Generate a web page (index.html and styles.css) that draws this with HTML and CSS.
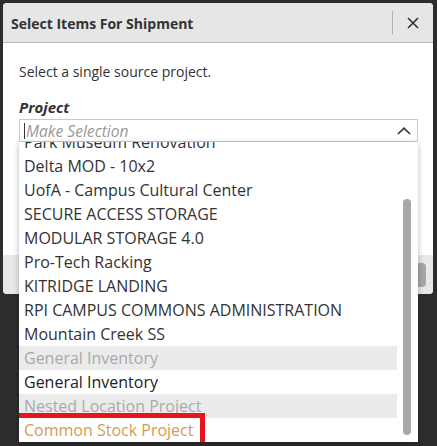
FILE: index.html
```html
<!DOCTYPE html>
<html>
<head>
<meta charset="utf-8">
<link rel="stylesheet" href="styles.css">
</head>
<body>
<div class="page">
  <div class="dialog">
    <div class="header">
      <div class="title">Select Items For Shipment</div>
      <div class="divider"></div>
      <button class="close" aria-label="Close">
        <svg width="12" height="12" viewBox="0 0 12 12"><path d="M1 1L11 11M11 1L1 11" stroke="#333" stroke-width="1.6" fill="none"/></svg>
      </button>
    </div>
    <div class="body">
      <p class="intro">Select a single source project.</p>
      <label class="label">Project</label>
      <div class="field">
        <div class="input">
          <span class="caret"></span>
          <span class="placeholder">Make Selection</span>
          <svg class="chev" width="14" height="8" viewBox="0 0 14 8"><path d="M1 7L7 1.2L13 7" stroke="#333" stroke-width="1.6" fill="none"/></svg>
        </div>
        <div class="menu">
          <ul class="options">
            <li><span>Park Museum Renovation</span></li>
            <li><span>Delta MOD - 10x2</span></li>
            <li><span>UofA - Campus Cultural Center</span></li>
            <li><span>SECURE ACCESS STORAGE</span></li>
            <li><span>MODULAR STORAGE 4.0</span></li>
            <li><span>Pro-Tech Racking</span></li>
            <li><span>KITRIDGE LANDING</span></li>
            <li><span>RPI CAMPUS COMMONS ADMINISTRATION</span></li>
            <li><span>Mountain Creek SS</span></li>
            <li class="disabled"><span>General Inventory</span></li>
            <li class="plain"><span>General Inventory</span></li>
            <li class="disabled"><span>Nested Location Project</span></li>
            <li class="accent"><span class="mark">Common Stock Project</span></li>
          </ul>
          <div class="thumb"></div>
        </div>
      </div>
    </div>
    <div class="footer">
      <button class="btn">Cancel</button>
      <button class="btn primary">Next</button>
    </div>
  </div>
</div>
</body>
</html>
```

FILE: styles.css
```css
html, body {
  margin: 0;
  padding: 0;
  background: #2d2d2d;
  font-family: "Open Sans", "Noto Sans", sans-serif;
  color: #333;
}

.page {
  padding: 3px 4px 0 3px;
  height: 443px;
  overflow: hidden;
}

.dialog {
  width: 430px;
  background: #fff;
  border-radius: 4px;
}

.header {
  display: flex;
  align-items: center;
  height: 39px;
  background: #e6e6e6;
  border-bottom: 1px solid #b9b9b9;
  border-radius: 4px 4px 0 0;
  padding-left: 8px;
}

.title {
  flex: 1;
  font-size: 14px;
  font-weight: 700;
  color: #333;
  padding-top: 1px;
}

.divider {
  width: 1px;
  height: 23px;
  background: #b0b0b0;
}

.close {
  width: 40px;
  height: 39px;
  border: 0;
  background: transparent;
  padding: 0;
  display: flex;
  align-items: center;
  justify-content: center;
}

.body {
  padding: 19px 15px 0 16px;
  height: 193px;
}

.intro {
  margin: 0;
  font-size: 14px;
  line-height: 20px;
  color: #333;
}

.label {
  display: block;
  margin-top: 15px;
  font-size: 15px;
  line-height: 20px;
  font-weight: 700;
  font-style: italic;
  color: #333;
}

.field {
  position: relative;
  margin-top: 2px;
}

.input {
  height: 21px;
  border: 1px solid #c9c9c9;
  display: flex;
  align-items: center;
  padding-left: 4px;
  padding-right: 6px;
}

.caret {
  width: 1px;
  height: 16px;
  background: #333;
  margin-right: 1px;
}

.placeholder {
  flex: 1;
  font-size: 15.6px;
  font-style: italic;
  color: #999;
}

.chev {
  display: block;
}

.menu {
  position: absolute;
  left: 0;
  right: 0;
  top: 23px;
  height: 300px;
  background: #fff;
  box-shadow: 0 2px 6px rgba(0, 0, 0, 0.28);
  z-index: 5;
}

.options {
  list-style: none;
  margin: 0;
  padding: 0;
  width: 378px;
  height: 300px;
  overflow: hidden;
}

.options li {
  height: 24px;
  line-height: 24px;
  font-size: 16px;
  color: #333;
  white-space: nowrap;
}

.options li:first-child {
  margin-top: -12px;
}

.options li span {
  display: inline-block;
  padding: 0 5px;
}

.options li.disabled {
  background: #ebebeb;
  color: #aaa;
}

.options li.plain {
  color: #222;
}

.options li.accent {
  color: #d39c4f;
}

.options li span.mark {
  padding: 0 7px 0 5px;
  height: 24px;
  outline: 5px solid #e8141c;
  position: relative;
  z-index: 2;
  background: #fff;
}

.thumb {
  position: absolute;
  left: 384px;
  top: 57px;
  width: 8px;
  height: 236px;
  border-radius: 4px;
  background: #a8a8a8;
}

.footer {
  height: 39px;
  background: #e8e8e8;
  border-radius: 0 0 4px 4px;
  display: flex;
  justify-content: flex-end;
  align-items: center;
  gap: 8px;
  padding-right: 7px;
}

.btn {
  height: 24px;
  border: 0;
  border-radius: 4px;
  background: #a6a6a6;
  color: #fff;
  font-family: inherit;
  font-size: 13px;
  padding: 0 14px;
}
```
